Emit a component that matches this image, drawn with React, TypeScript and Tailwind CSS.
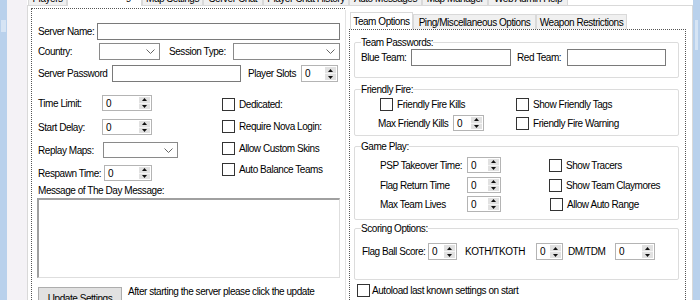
import React from "react";

const Arrows = () => (
  <div className="flex flex-col w-[11px] my-[1px] mr-[1px] bg-[#e1e1e1]">
    <div className="flex-1 flex items-center justify-center border-b border-[#f4f4f4]">
      <svg width="5" height="3" viewBox="0 0 5 3">
        <path d="M2.5 0L5 3H0z" fill="#111" />
      </svg>
    </div>
    <div className="flex-1 flex items-center justify-center">
      <svg width="5" height="3" viewBox="0 0 5 3">
        <path d="M0 0H5L2.5 3z" fill="#111" />
      </svg>
    </div>
  </div>
);

function Spin({ className }: { className: string }) {
  return (
    <div className={"flex shrink-0 border border-[#b4b4b4] bg-white " + className}>
      <div className="flex-1 pl-[3px] flex items-center">0</div>
      <Arrows />
    </div>
  );
}

function Select({ className }: { className: string }) {
  return (
    <div className={"flex shrink-0 items-center justify-end border border-[#8a8a8a] bg-white pr-[4px] " + className}>
      <svg width="9" height="5" viewBox="0 0 9 5">
        <path d="M0.5 0.5L4.5 4.5L8.5 0.5" stroke="#666" fill="none" />
      </svg>
    </div>
  );
}

function Input({ className }: { className: string }) {
  return <div className={"shrink-0 border border-[#7a7a7a] bg-white " + className} />;
}

const Check = () => <div className="w-[13px] h-[13px] shrink-0 border border-[#333] bg-white" />;

function CheckRow({ label, className }: { label: string; className: string }) {
  return (
    <div className={"flex items-center h-[13px] " + className}>
      <Check />
      <span className="ml-[4px] whitespace-nowrap">{label}</span>
    </div>
  );
}

function Group({ title, className, children }: { title: string; className: string; children?: React.ReactNode }) {
  return (
    <div className={"w-[325px] shrink-0 border border-[#dcdcdc] rounded-[2px] " + className}>
      <div className="-mt-[6px] ml-[6px] w-fit bg-white h-[11px] whitespace-nowrap">{title}</div>
      {children}
    </div>
  );
}

const OuterTab = ({ label, className }: { label: string; className: string }) => (
  <div className={"h-[22px] shrink-0 bg-[#f0f0f0] border border-[#d9d9d9] flex items-end justify-center pb-[1px] whitespace-nowrap " + className}>
    {label}
  </div>
);

export default function App() {
  return (
    <div className="w-[700px] h-[300px] overflow-hidden flex bg-white text-[10px] tracking-[-0.45px] leading-[11px] text-black whitespace-nowrap [font-family:'Liberation_Sans',Arial,sans-serif]">
      <div className="w-[7px] shrink-0 bg-[#b9d1ec] flex flex-col">
        <div className="h-[20px] shrink-0" />
        <div className="h-[12px] shrink-0 mx-[1px] bg-[#d6e4f4]" />
      </div>
      <div className="w-[20px] shrink-0 bg-[#f4f2f6]" />
      <div className="w-[666px] shrink-0 flex flex-col min-h-0">
        {/* outer tab strip */}
        <div className="h-[6px] shrink-0 flex items-end overflow-hidden">
          <div className="w-[1px] h-[1px] bg-[#d9d9d9] shrink-0" />
          <OuterTab label="Players" className="w-[39px]" />
          <div className="w-[75px] h-[24px] shrink-0 bg-white border-x border-t border-[#d9d9d9] flex items-end justify-center pb-[4px]">
            Server Settings
          </div>
          <OuterTab label="Map Settings" className="w-[61px]" />
          <OuterTab label="Server Chat" className="w-[60px]" />
          <OuterTab label="Player Chat History" className="w-[86px]" />
          <OuterTab label="Auto Messages" className="w-[73px]" />
          <OuterTab label="Map Manager" className="w-[66px]" />
          <OuterTab label="Web Admin Help" className="w-[80px]" />
          <div className="flex-1 h-[1px] bg-[#d9d9d9]" />
        </div>
        {/* page */}
        <div className="flex-1 min-h-0 overflow-hidden flex items-start border-x border-[#d9d9d9] bg-white">
          {/* left panel */}
          <div className="ml-[3px] mt-[2px] w-[314px] shrink-0 self-stretch border-l border-t border-dotted border-[#555] pl-[6px] pt-[14px] flex flex-col">
            <div className="flex items-center h-[17px] shrink-0">
              <span className="w-[59px] shrink-0">Server Name:</span>
              <Input className="w-[243px] h-[17px]" />
            </div>
            <div className="flex items-center h-[17px] shrink-0 mt-[3px]">
              <span className="w-[61px] shrink-0">Country:</span>
              <Select className="w-[61px] h-[17px]" />
              <span className="w-[64px] ml-[9px] shrink-0">Session Type:</span>
              <Select className="w-[107px] h-[17px]" />
            </div>
            <div className="flex items-center h-[17px] shrink-0 mt-[5px]">
              <span className="w-[74px] shrink-0">Server Password</span>
              <Input className="w-[129px] h-[17px]" />
              <span className="w-[53px] ml-[7px] shrink-0">Player Slots</span>
              <Spin className="w-[37px] h-[17px]" />
            </div>
            <div className="flex shrink-0 mt-[13px]">
              <div className="w-[184px] shrink-0 flex flex-col">
                <div className="flex items-center h-[16px]">
                  <span className="w-[64px] shrink-0">Time Limit:</span>
                  <Spin className="w-[50px] h-[16px]" />
                </div>
                <div className="flex items-center h-[16px] mt-[8px]">
                  <span className="w-[64px] shrink-0">Start Delay:</span>
                  <Spin className="w-[50px] h-[16px]" />
                </div>
                <div className="flex items-center h-[16px] mt-[7px]">
                  <span className="w-[65px] shrink-0">Replay Maps:</span>
                  <Select className="w-[75px] h-[16px]" />
                </div>
                <div className="flex items-center h-[16px] mt-[7px]">
                  <span className="w-[66px] shrink-0">Respawn Time:</span>
                  <Spin className="w-[48px] h-[16px]" />
                </div>
              </div>
              <div className="flex flex-col">
                <CheckRow label="Dedicated:" className="mt-[3px]" />
                <CheckRow label="Require Nova Login:" className="mt-[9px]" />
                <CheckRow label="Allow Custom Skins" className="mt-[9px]" />
                <CheckRow label="Auto Balance Teams" className="mt-[8px]" />
              </div>
            </div>
            <div className="mt-[4px] h-[11px] shrink-0">Message of The Day Message:</div>
            <div className="mt-[2px] -ml-[1px] w-[303px] h-[80px] shrink-0 bg-white border-t-2 border-l-2 border-r border-b border-t-[#a0a0a0] border-l-[#a0a0a0] border-r-[#dedede] border-b-[#dedede]" />
            <div className="flex items-start shrink-0 mt-[9px]">
              <div className="w-[84px] h-[23px] shrink-0 bg-[#e1e1e1] border border-[#adadad] flex items-center justify-center">
                Update Settings
              </div>
              <div className="ml-[6px] -mt-[2px] leading-[13px] w-[200px] whitespace-normal">
                After starting the server please click the update settings button to apply custom settings.
              </div>
            </div>
          </div>
          {/* right panel */}
          <div className="mt-[4px] flex-1 self-stretch border-l border-[#e3e3e3] pl-[3px] pt-[2px] flex flex-col">
            <div className="flex items-end h-[17px] shrink-0 pl-[1px]">
              <div className="w-[63px] h-[17px] shrink-0 bg-white border-x border-t border-[#d9d9d9] flex items-center justify-center">
                Team Options
              </div>
              <div className="w-[123px] h-[15px] shrink-0 bg-[#f0f0f0] border-x border-t border-[#d9d9d9] flex items-center justify-center">
                Ping/Miscellaneous Options
              </div>
              <div className="w-[91px] h-[15px] shrink-0 bg-[#f0f0f0] border-x border-t border-[#d9d9d9] flex items-center justify-center">
                Weapon Restrictions
              </div>
            </div>
            <div className="w-[337px] flex-1 border-x border-t border-dotted border-[#555] pl-[4px] flex flex-col">
              <Group title="Team Passwords:" className="mt-[12px] h-[36px]">
                <div className="flex items-center h-[17px] mt-[1px] pl-[6px]">
                  <span className="w-[50px] shrink-0">Blue Team:</span>
                  <Input className="w-[100px] h-[17px]" />
                  <span className="w-[50px] ml-[6px] shrink-0">Red Team:</span>
                  <Input className="w-[99px] h-[17px]" />
                </div>
              </Group>
              <Group title="Friendly Fire:" className="mt-[11px] h-[47px]">
                <div className="flex items-center h-[13px] mt-[3px] pl-[25px]">
                  <CheckRow label="Friendly Fire Kills" className="w-[136px] shrink-0" />
                  <CheckRow label="Show Friendly Tags" className="" />
                </div>
                <div className="flex items-center h-[16px] mt-[4px] pl-[23px]">
                  <span className="w-[75px] shrink-0">Max Friendly Kills</span>
                  <Spin className="w-[31px] h-[16px]" />
                  <CheckRow label="Friendly Fire Warning" className="ml-[32px]" />
                </div>
              </Group>
              <Group title="Game Play:" className="mt-[10px] h-[74px]">
                <div className="flex items-center h-[16px] mt-[5px] pl-[25px]">
                  <span className="w-[87px] shrink-0">PSP Takeover Time:</span>
                  <Spin className="w-[34px] h-[16px]" />
                  <CheckRow label="Show Tracers" className="ml-[48px]" />
                </div>
                <div className="flex items-center h-[16px] mt-[4px] pl-[25px]">
                  <span className="w-[87px] shrink-0">Flag Return Time</span>
                  <Spin className="w-[34px] h-[16px]" />
                  <CheckRow label="Show Team Claymores" className="ml-[48px]" />
                </div>
                <div className="flex items-center h-[16px] mt-[3px] pl-[25px]">
                  <span className="w-[87px] shrink-0">Max Team Lives</span>
                  <Spin className="w-[34px] h-[16px]" />
                  <CheckRow label="Allow Auto Range" className="ml-[49px]" />
                </div>
              </Group>
              <Group title="Scoring Options:" className="mt-[8px] h-[52px]">
                <div className="flex items-center h-[17px] mt-[9px] pl-[7px]">
                  <span className="w-[66px] shrink-0">Flag Ball Score:</span>
                  <Spin className="w-[29px] h-[17px]" />
                  <span className="w-[71px] ml-[8px] shrink-0">KOTH/TKOTH</span>
                  <Spin className="w-[27px] h-[17px]" />
                  <span className="w-[47px] ml-[5px] shrink-0">DM/TDM</span>
                  <Spin className="w-[40px] h-[17px]" />
                </div>
              </Group>
              <div className="flex items-center h-[13px] shrink-0 mt-[4px] ml-[3px]">
                <Check />
                <span className="ml-[2px]">Autoload last known settings on start</span>
              </div>
            </div>
          </div>
        </div>
      </div>
      <div className="w-[7px] shrink-0 bg-[#b9d1ec] flex flex-col">
        <div className="h-[20px] shrink-0" />
        <div className="h-[30px] shrink-0 mx-[2px] bg-[#d6e4f4]" />
      </div>
    </div>
  );
}
